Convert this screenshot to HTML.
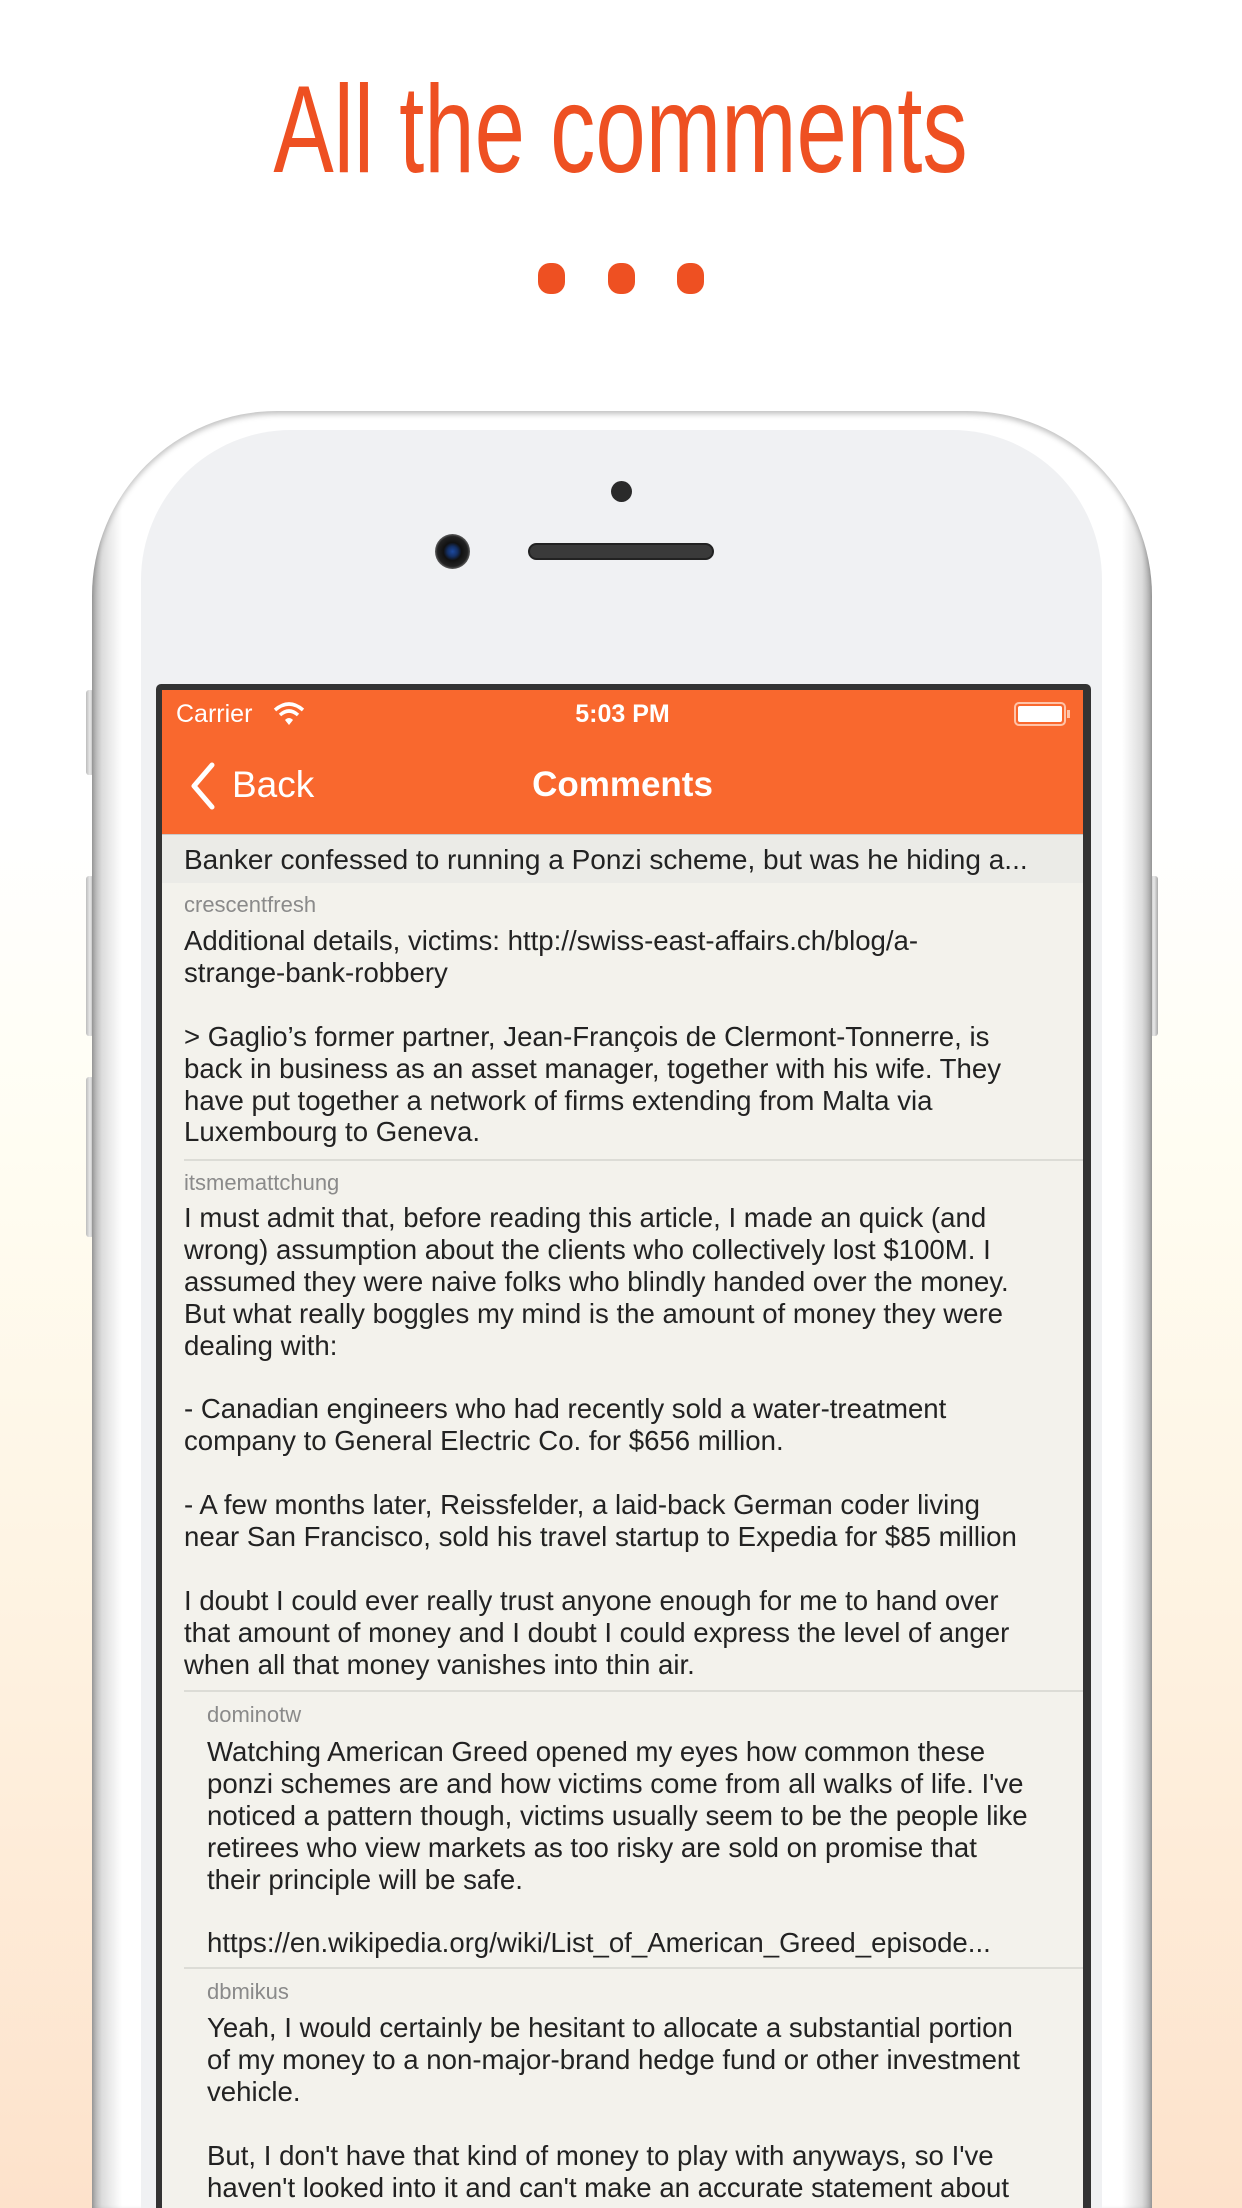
<!DOCTYPE html>
<html><head><meta charset="utf-8"><style>
*{margin:0;padding:0;box-sizing:border-box}
html{width:1242px;height:2208px;overflow:hidden}
body{width:1242px;height:2208px;overflow:hidden;position:relative;font-family:"Liberation Sans",sans-serif;
background:linear-gradient(to bottom,#ffffff 0px,#ffffff 820px,#fffdf2 1150px,#fef3e2 1600px,#fde2cb 2208px);}
.wrap{position:absolute;left:0;top:0;width:1242px;height:2208px;overflow:hidden}
.abs{position:absolute}
.title{position:absolute;left:0;width:1242px;top:60px;text-align:center;color:#ee5022;font-size:124px;line-height:140px;}
.title span{display:inline-block;transform:scaleX(0.73);transform-origin:center;}
.dot{position:absolute;top:263px;width:27px;height:31px;border-radius:12px;background:#ee5022}
.body{position:absolute;left:92px;top:411px;width:1060px;height:1797px;border-radius:185px 185px 0 0;
background:linear-gradient(to right,#a9a9a9 0,#dcdcdc 10px,#eeeeee 20px,#ffffff 30px,#ffffff 1030px,#eeeeee 1040px,#dcdcdc 1050px,#a9a9a9 1060px);
box-shadow:inset 0 3px 6px rgba(0,0,0,0.25)}
.face{position:absolute;left:141px;top:430px;width:961px;height:1778px;border-radius:150px 150px 0 0;background:#f0f1f3}
.btn{position:absolute;width:8px;background:linear-gradient(to right,#bdbdbd,#e8e8e8,#aaaaaa);border-radius:3px}
.screen{position:absolute;left:156px;top:684px;width:935px;height:1524px;background:#333;border-radius:5px 5px 0 0}
.inner{position:absolute;left:162px;top:690px;width:921px;height:1518px;background:#f3f2ec;overflow:hidden}
.nav{position:absolute;left:0;top:0;width:921px;height:144px;background:#f9682e;color:#fff}
.hdr{position:absolute;left:0;top:144px;width:921px;height:49px;background:#ebebe7;border-top:1px solid #c9c9c9;font-size:28px;line-height:49px;color:#222;padding-left:22px;white-space:nowrap}
.user{position:absolute;font-size:22px;color:#8a8a8a;line-height:24px}
.txt{position:absolute;font-size:27.6px;line-height:31.9px;color:#222;white-space:pre}
.sep{position:absolute;height:2px;background:#dcdcd6;right:0}
</style></head><body>
<div class="wrap">
<div class="title"><span>All the comments</span></div>
<div class="dot" style="left:538px"></div>
<div class="dot" style="left:608px"></div>
<div class="dot" style="left:677px"></div>

<div class="btn" style="left:86px;top:690px;height:85px"></div>
<div class="btn" style="left:86px;top:876px;height:160px"></div>
<div class="btn" style="left:86px;top:1077px;height:160px"></div>
<div class="btn" style="left:1150px;top:876px;height:160px"></div>
<div class="body"></div>
<div class="face"></div>
<div class="abs" style="left:611px;top:481px;width:21px;height:21px;border-radius:50%;background:#2a2a2a"></div>
<div class="abs" style="left:435px;top:534px;width:35px;height:35px;border-radius:50%;background:radial-gradient(circle at 50% 50%,#1d4aa0 0,#143066 5px,#111 9px,#222 15px,#555 17px)"></div>
<div class="abs" style="left:528px;top:543px;width:186px;height:17px;border-radius:9px;background:#3a3a3a;border:2px solid #222"></div>

<div class="screen"></div>
<div class="inner">
  <div class="nav">
    <div class="abs" style="left:14px;top:10px;font-size:25px;line-height:28px">Carrier</div>
    <svg class="abs" style="left:111px;top:11px" width="32" height="26" viewBox="0 0 32 26"><path d="M2 9 Q16 -3 30 9" stroke="#fff" stroke-width="3.5" fill="none"/><path d="M7 14 Q16 6 25 14" stroke="#fff" stroke-width="3.5" fill="none"/><path d="M12 19 L16 24 L20 19 Q16 15 12 19Z" fill="#fff"/></svg>
    <div class="abs" style="left:0;width:921px;text-align:center;top:10px;font-size:25px;line-height:28px;font-weight:bold">5:03 PM</div>
    <div class="abs" style="left:852px;top:12px;width:52px;height:24px;border:2px solid #ffc3a8;border-radius:5px;padding:2px"><div style="width:100%;height:100%;background:#fff;border-radius:2px"></div></div>
    <div class="abs" style="left:905px;top:20px;width:3px;height:8px;background:#ffc3a8"></div>
    <svg class="abs" style="left:26px;top:72px" width="30" height="48" viewBox="0 0 30 48"><path d="M24 3 L6 24 L24 45" stroke="#fff" stroke-width="5" fill="none" stroke-linecap="round" stroke-linejoin="round"/></svg>
    <div class="abs" style="left:70px;top:73px;font-size:37px;line-height:44px">Back</div>
    <div class="abs" style="left:0;width:921px;text-align:center;top:73px;font-size:35px;line-height:44px;font-weight:bold">Comments</div>
  </div>
  <div class="hdr">Banker confessed to running a Ponzi scheme, but was he hiding a...</div>

  <div class="user" style="left:22px;top:203px">crescentfresh</div>
  <div class="txt" style="left:22px;top:235px">Additional details, victims: http://swiss-east-affairs.ch/blog/a-
strange-bank-robbery

&gt; Gaglio’s former partner, Jean-François de Clermont-Tonnerre, is
back in business as an asset manager, together with his wife. They
have put together a network of firms extending from Malta via
Luxembourg to Geneva.</div>
  <div class="sep" style="left:22px;top:469px"></div>

  <div class="user" style="left:22px;top:481px">itsmemattchung</div>
  <div class="txt" style="left:22px;top:512px">I must admit that, before reading this article, I made an quick (and
wrong) assumption about the clients who collectively lost $100M. I
assumed they were naive folks who blindly handed over the money.
But what really boggles my mind is the amount of money they were
dealing with:

- Canadian engineers who had recently sold a water-treatment
company to General Electric Co. for $656 million.

- A few months later, Reissfelder, a laid-back German coder living
near San Francisco, sold his travel startup to Expedia for $85 million

I doubt I could ever really trust anyone enough for me to hand over
that amount of money and I doubt I could express the level of anger
when all that money vanishes into thin air.</div>
  <div class="sep" style="left:22px;top:1000px"></div>

  <div class="user" style="left:45px;top:1013px">dominotw</div>
  <div class="txt" style="left:45px;top:1046px">Watching American Greed opened my eyes how common these
ponzi schemes are and how victims come from all walks of life. I've
noticed a pattern though, victims usually seem to be the people like
retirees who view markets as too risky are sold on promise that
their principle will be safe.

https://en.wikipedia.org/wiki/List_of_American_Greed_episode...</div>
  <div class="sep" style="left:22px;top:1277px"></div>

  <div class="user" style="left:45px;top:1290px">dbmikus</div>
  <div class="txt" style="left:45px;top:1322px">Yeah, I would certainly be hesitant to allocate a substantial portion
of my money to a non-major-brand hedge fund or other investment
vehicle.

But, I don't have that kind of money to play with anyways, so I've
haven't looked into it and can't make an accurate statement about</div>
</div>
</div>
</body></html>
